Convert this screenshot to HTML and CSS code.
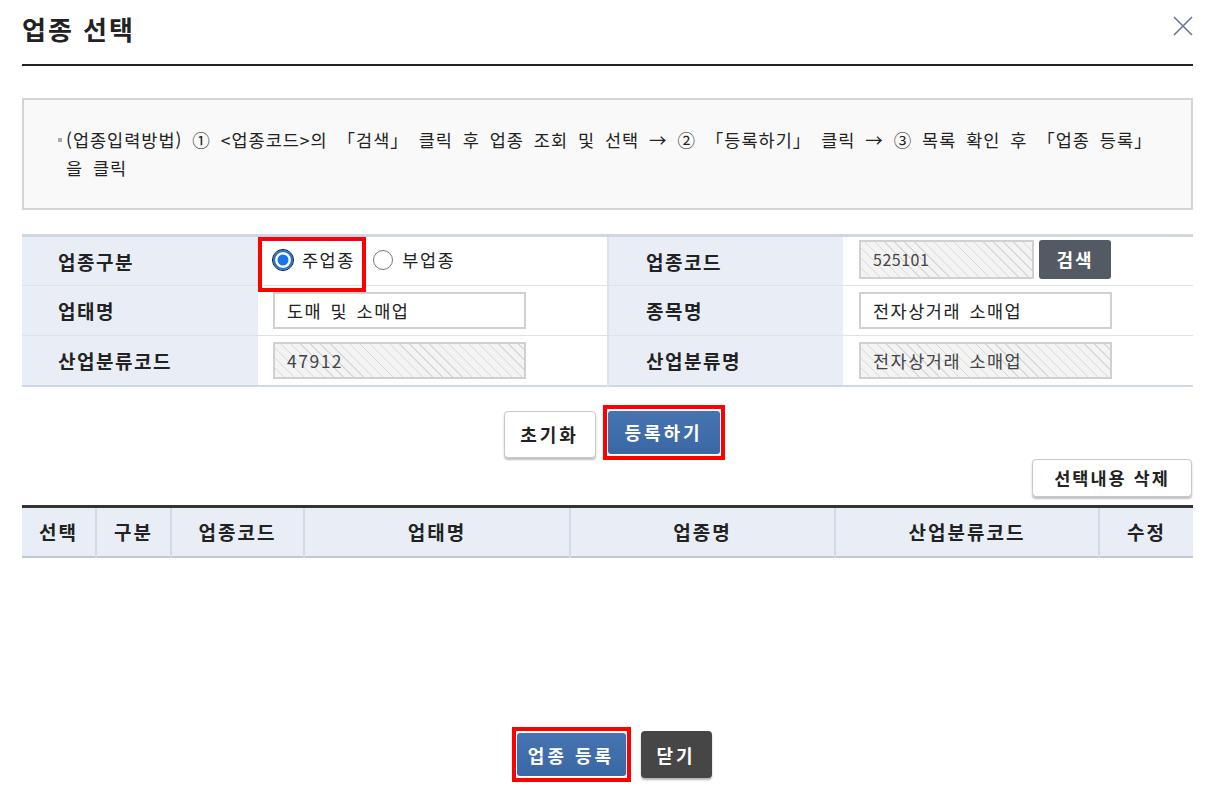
FILE: index.html
```html
<!DOCTYPE html>
<html lang="ko">
<head>
    <meta charset="UTF-8">
    <title>업종 선택</title>
    <link rel="stylesheet" href="styles.css">
</head>
<body>
    <div class="dialog">
        <header class="dlg-head">
            <h1>업종 선택</h1>
            <button class="close" aria-label="닫기">
                <svg width="20" height="20" viewBox="0 0 20 20"><path d="M1 1 L19 19 M19 1 L1 19" stroke="#6d7592" stroke-width="1.6" fill="none"/></svg>
            </button>
        </header>

        <!-- 입력 방법 안내 -->
        <div class="guide">
            <p><span class="bullet"></span>(업종입력방법) ① &lt;업종코드&gt;의 「검색」 클릭 후 업종 조회 및 선택 → ② 「등록하기」 클릭 → ③ 목록 확인 후 「업종 등록」<br>을 클릭</p>
        </div>

        <table class="form">
            <colgroup>
                <col style="width:236px"><col style="width:350px"><col style="width:235px"><col>
            </colgroup>
            <tr>
                <th>업종구분</th>
                <td class="radios">
                    <span class="hl"></span>
                    <label class="radio on"><span class="dot"></span>주업종</label>
                    <label class="radio"><span class="dot"></span>부업종</label>
                </td>
                <th>업종코드</th>
                <td>
                    <div class="code-row">
                        <span class="inp ro short">525101</span>
                        <button class="btn-search">검색</button>
                    </div>
                </td>
            </tr>
            <tr>
                <th>업태명</th>
                <td><span class="inp">도매 및 소매업</span></td>
                <th>종목명</th>
                <td><span class="inp">전자상거래 소매업</span></td>
            </tr>
            <tr>
                <th>산업분류코드</th>
                <td><span class="inp ro">47912</span></td>
                <th>산업분류명</th>
                <td><span class="inp ro">전자상거래 소매업</span></td>
            </tr>
        </table>

        <div class="actions">
            <button class="btn btn-white">초기화</button>
            <span class="redbox"><button class="btn btn-blue">등록하기</button></span>
        </div>

        <div class="list-tools">
            <button class="btn btn-white small">선택내용 삭제</button>
        </div>

        <table class="list">
            <colgroup>
                <col style="width:74px"><col style="width:75px"><col style="width:133px"><col style="width:266px"><col style="width:265px"><col style="width:264px"><col>
            </colgroup>
            <tr>
                <th>선택</th>
                <th>구분</th>
                <th>업종코드</th>
                <th>업태명</th>
                <th>업종명</th>
                <th>산업분류코드</th>
                <th>수정</th>
            </tr>
        </table>

        <div class="footer-btns">
            <span class="redbox"><button class="btn btn-blue wide">업종 등록</button></span>
            <button class="btn btn-dark">닫기</button>
        </div>
    </div>
</body>
</html>
```

FILE: styles.css
```css
/* reset */
* {
    margin: 0;
    padding: 0;
    box-sizing: border-box;
}

body {
    font-family: "Noto Sans CJK KR", "Noto Sans", sans-serif;
    background-color: #fff;
    color: #222;
}

.dialog {
    width: 1214px;
    padding: 0 21px 0 22px;
}

/* header */
.dlg-head {
    height: 66px;
    border-bottom: 2px solid #222;
    display: flex;
    justify-content: space-between;
    align-items: flex-start;
}

.dlg-head h1 {
    font-size: 26px;
    font-weight: bold;
    line-height: 30px;
    margin-top: 14px;
    letter-spacing: 2px;
}

.close {
    border: none;
    background: none;
    margin-top: 16px;
    width: 20px;
    height: 20px;
}

/* guide box */
.guide {
    margin-top: 32px;
    height: 112px;
    border: 2px solid #d4d4d4;
    background-color: #f9f9f9;
    display: flex;
    align-items: center;
    padding-left: 42px;
}

.guide p {
    font-size: 17.5px;
    line-height: 28px;
    color: #222;
    white-space: nowrap;
    letter-spacing: 1px;
    word-spacing: 4px;
    position: relative;
}

.bullet {
    position: absolute;
    left: -8px;
    top: 12px;
    width: 4px;
    height: 4px;
    background-color: #aaa;
}

/* form table */
.form {
    margin-top: 24px;
    width: 100%;
    border-collapse: collapse;
    border-top: 3px solid #cfd7e2;
    border-bottom: 2px solid #cfd7e2;
}

.form tr {
    height: 50px;
    border-bottom: 1px solid #dde3ea;
}

.form th {
    background-color: #e9eef6;
    text-align: left;
    padding-left: 36px;
    font-size: 19px;
    font-weight: bold;
    letter-spacing: 1.5px;
    color: #222;
}

.form th + td + th {
    border-left: 2px solid #dde3ea;
    padding-left: 37px;
}

.form td {
    padding-left: 15px;
}

.form th + td + th + td {
    padding-left: 16px;
}

.inp {
    display: flex;
    align-items: center;
    width: 253px;
    height: 37px;
    border: 2px solid #d0d0d0;
    background-color: #fff;
    padding-left: 12px;
    font-size: 17.5px;
    letter-spacing: 1.5px;
    word-spacing: 2px;
    color: #222;
}

.inp.ro {
    color: #444;
    background: repeating-linear-gradient(45deg, #f3f3f3 0, #f3f3f3 6px, #d9d9d9 6px, #d9d9d9 7px);
}

.inp.short {
    width: 175px;
    height: 39px;
    font-size: 16px;
    letter-spacing: 0.5px;
}

.code-row {
    display: flex;
    gap: 5px;
    margin-top: -4px;
}

.btn-search {
    width: 72px;
    height: 39px;
    border: none;
    border-radius: 3px;
    background-color: #545a63;
    color: #fff;
    font-family: inherit;
    font-size: 18px;
    font-weight: bold;
    letter-spacing: 2px;
}

/* radios */
.radios {
    position: relative;
}

.hl {
    position: absolute;
    left: 0;
    top: 0;
    width: 108px;
    height: 55px;
    border: 4px solid #ff0000;
}

.radio {
    display: inline-flex;
    align-items: center;
    font-size: 17.5px;
    letter-spacing: 1.5px;
    color: #222;
    margin-right: 14px;
}

.radio .dot {
    width: 20px;
    height: 20px;
    border-radius: 50%;
    border: 1.5px solid #777;
    background-color: #fff;
    margin-right: 9px;
}

.radio.on .dot {
    border: 2px solid #1a73e8;
    box-shadow: inset 0 0 0 2.5px #fff, inset 0 0 0 10px #1a73e8;
    outline: 1px solid #111;
    outline-offset: 0;
}

/* buttons */
.btn {
    font-family: inherit;
    font-weight: bold;
    font-size: 18px;
    letter-spacing: 3px;
    border-radius: 4px;
    cursor: pointer;
}

.btn-white {
    background-color: #fff;
    color: #222;
    border: 1px solid #c8c8c8;
    box-shadow: 0 2px 2px rgba(0, 0, 0, 0.25);
}

.btn-blue {
    background: linear-gradient(#4574b1, #3b68a4);
    color: #fff;
    border: none;
    border-radius: 3px;
}

.btn-dark {
    background-color: #464646;
    color: #fff;
    border: none;
    box-shadow: 0 2px 2px rgba(0, 0, 0, 0.3);
}

.redbox {
    display: inline-block;
    border: 4px solid #ff0000;
    padding: 2px 1px 2px 1px;
}

.actions {
    margin-top: 18px;
    display: flex;
    justify-content: center;
    align-items: flex-end;
    gap: 7px;
    padding-left: 13px;
}

.actions .btn-white {
    width: 92px;
    height: 47px;
    margin-bottom: 2px;
}

.actions .btn-blue {
    width: 112px;
    height: 43px;
    display: block;
}

.list-tools {
    display: flex;
    justify-content: flex-end;
    margin-top: -1px;
    padding-right: 1px;
}

.btn.small {
    width: 160px;
    height: 38px;
    font-size: 17.5px;
    letter-spacing: 2px;
}

/* list table */
.list {
    margin-top: 8px;
    width: 100%;
    border-collapse: collapse;
    border-top: 3px solid #333;
    border-bottom: 2px solid #c2c9d3;
}

.list th {
    height: 51px;
    background-color: #e9eef6;
    font-size: 19px;
    font-weight: bold;
    letter-spacing: 2px;
    color: #222;
    border-left: 2px solid #d3dae4;
}

.list th:first-child {
    border-left: none;
}

.footer-btns {
    margin-top: 169px;
    display: flex;
    justify-content: center;
    align-items: center;
    gap: 10px;
    padding-left: 8px;
}

.btn.wide {
    width: 109px;
    height: 43px;
    display: block;
}

.btn-dark {
    width: 71px;
    height: 47px;
}
```
